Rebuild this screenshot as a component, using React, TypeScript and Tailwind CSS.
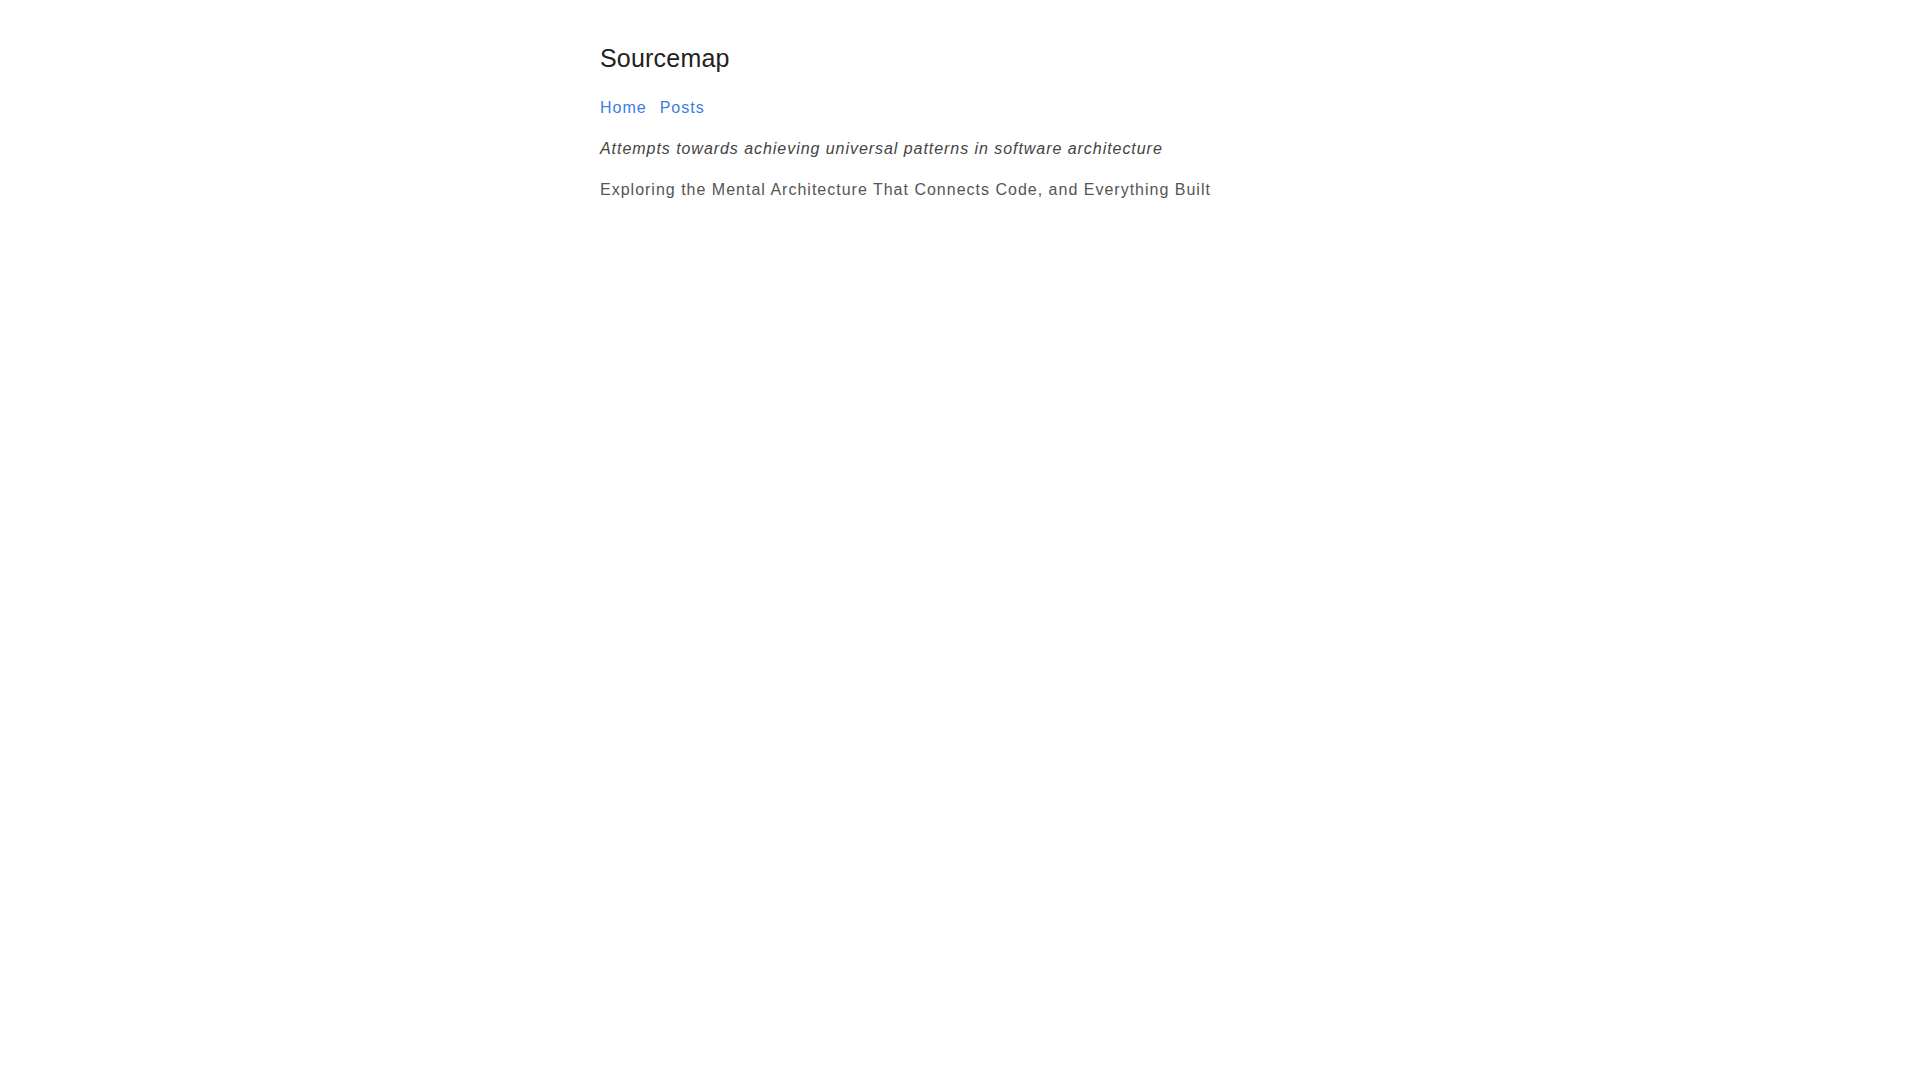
export default function App() {
  return (
    <div className="min-h-screen bg-white font-['Liberation_Sans',Arial,sans-serif] tracking-[1px]">
      <div className="mx-auto w-[720px] pt-[43px]">
        <header>
          <h1 className="text-[25px] leading-[30px] tracking-[0.2px] text-[#222222]">Sourcemap</h1>
          <nav className="mt-[25px] flex gap-[13px] text-[16px] leading-[20px]">
            <a href="#" className="text-[#3b7de0]">Home</a>
            <a href="#" className="text-[#3b7de0]">Posts</a>
          </nav>
        </header>
        <p className="mt-[21px] text-[16px] leading-[20px] italic tracking-[0.95px] text-[#444444]">
          Attempts towards achieving universal patterns in software architecture
        </p>
        <p className="mt-[21px] text-[16px] leading-[20px] text-[#555555]">
          Exploring the Mental Architecture That Connects Code, and Everything Built
        </p>
      </div>
    </div>
  );
}
